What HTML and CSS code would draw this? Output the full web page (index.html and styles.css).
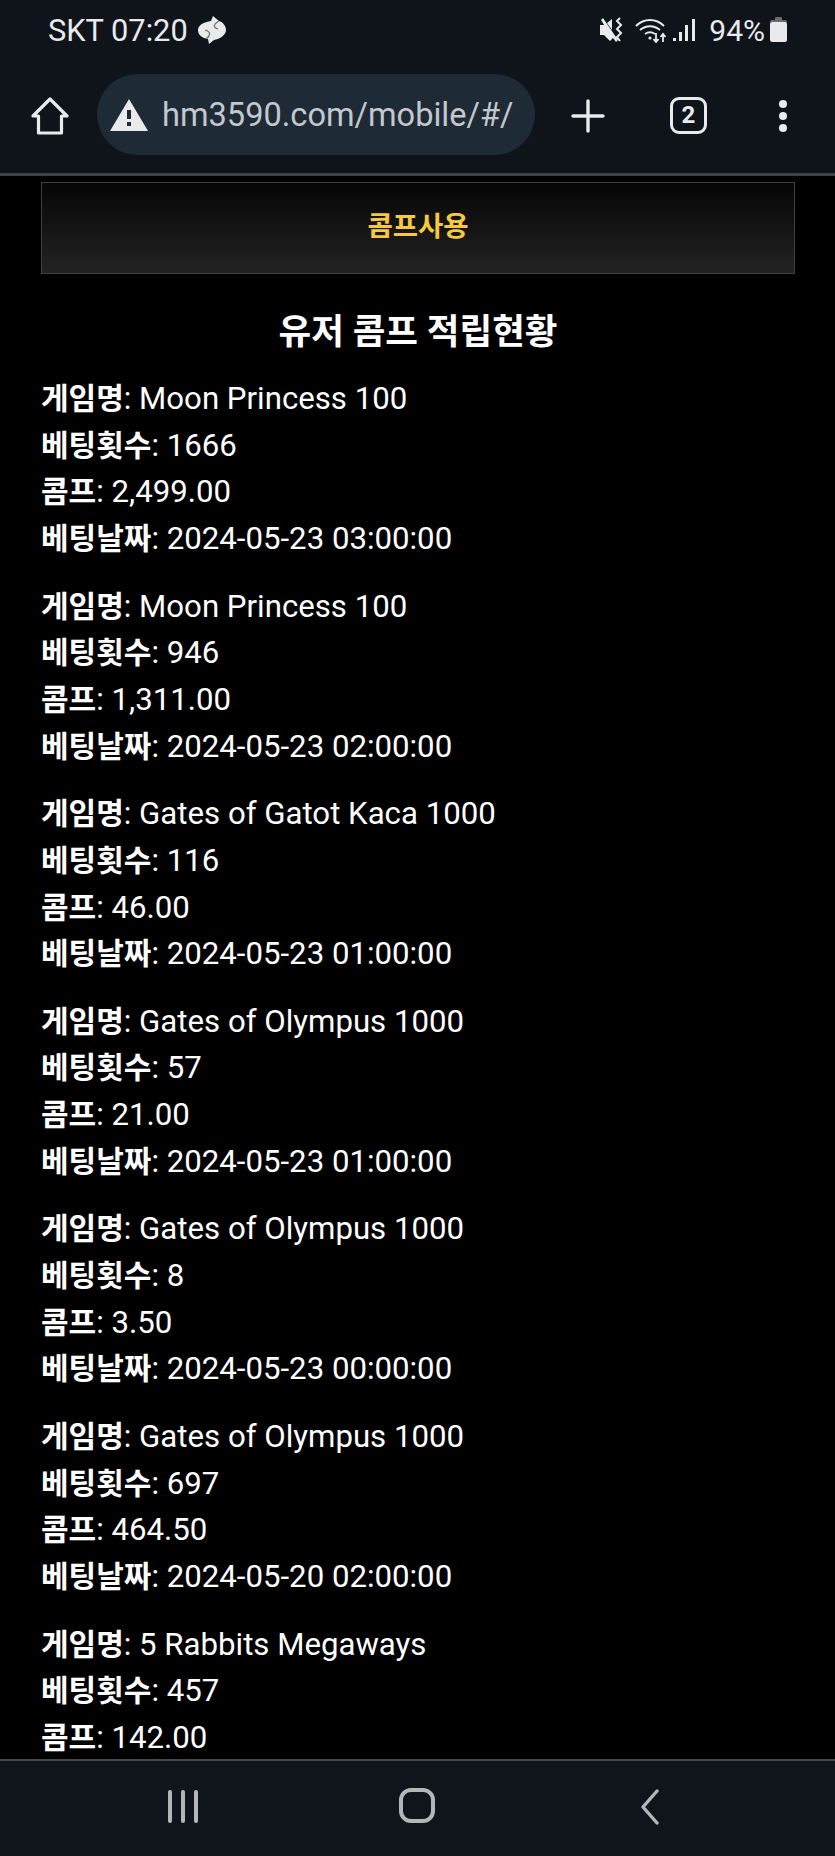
FILE: index.html
```html
<!DOCTYPE html>
<html lang="ko">
<head>
    <meta charset="UTF-8">
    <meta name="viewport" content="width=device-width, initial-scale=1.0">
    <title>콤프사용</title>
    <link rel="stylesheet" href="styles.css">
</head>
<body>
    <div class="phone">
        <header class="top-bar">
            <div class="status-bar">
                <div class="status-left">
                    <span>SKT 07:20</span>
                    <svg class="talk-icon" width="30" height="28" viewBox="0 0 30 28"><path d="M1 14C1 9 7 6 14 5L16 0 22 5C26 6 29 10 29 14 29 19 23 23 17 24L12 28 11 23C5 22 1 19 1 14Z" fill="#e8eaec"/><path d="M22 5C17 8 15 11 21 13M9 23C13 20 15 16 8 14" fill="none" stroke="#6d7074" stroke-width="1.300"/></svg>
                </div>
                <div class="status-right">
                    <svg width="26" height="26" viewBox="0 0 26 26"><path d="M1 8h4L2 3l2-2 15 22-2 2-3-4-3 3-6-6H1zM8 6l5-4v11z" fill="#e8eaec"/><path d="M21 1l-3 3 4 4-4 4 4 4-4 4 3 4" fill="none" stroke="#e8eaec" stroke-width="2"/></svg>
                    <svg class="wifi-icon" width="32" height="26" viewBox="0 0 32 26" fill="none" stroke="#e8eaec" stroke-width="2"><path d="M1 9c8-8 20-8 28 0M5 13c6-5 14-5 20 0M10 17c3-2 7-2 10 0"/><circle cx="15" cy="21" r="1.600" fill="#e8eaec" stroke="none"/><path d="M21 16v9M18.500 22l2.500 3 2.500-3M28 25v-7M25.500 20l2.500-3 2.500 3" stroke-width="1.800"/></svg>
                    <svg class="signal-icon" width="23" height="24" viewBox="0 0 23 24" fill="#e8eaec"><rect x="0" y="20" width="3" height="3"/><rect x="6" y="14" width="3" height="9"/><rect x="12" y="7" width="3" height="16"/><rect x="19" y="1" width="3" height="22"/></svg>
                    <span class="battery-text">94%</span>
                    <svg width="17" height="26" viewBox="0 0 17 26"><rect x="5" y="0" width="7" height="4" rx="1" fill="#6a6d70"/><rect x="0" y="3" width="17" height="4" rx="2" fill="#6a6d70"/><rect x="0" y="5" width="17" height="20" rx="2.500" fill="#e8eaec"/></svg>
                </div>
            </div>
            <div class="tool-bar">
                <svg class="home-icon" width="38" height="38" viewBox="0 0 38 38" fill="none" stroke="#e8eaec" stroke-width="3.200" stroke-linejoin="round"><path d="M2 19L19 2l17 17h-5.500v17h-23V19z"/></svg>
                <div class="url-pill">
                    <svg width="38" height="32" viewBox="0 0 38 32"><path d="M19 0l19 32H0z" fill="#e8eaec"/><rect x="17" y="11" width="4" height="9" fill="#1e2a36"/><rect x="17" y="23" width="4" height="4" fill="#1e2a36"/></svg>
                    <span class="url-text">hm3590.com/mobile/#/</span>
                </div>
                <svg class="plus-icon" width="34" height="34" viewBox="0 0 34 34" stroke="#e8eaec" stroke-width="3.400" stroke-linecap="round"><path d="M17 2v30M2 17h30"/></svg>
                <div class="tab-count">2</div>
                <div class="menu-dots"><i></i><i></i><i></i></div>
            </div>
        </header>

        <main class="content">
            <div class="comp-btn">콤프사용</div>
            <h2 class="list-title">유저 콤프 적립현황</h2>

            <div class="comp-item">
                <p><b>게임명</b>: Moon Princess 100</p>
                <p><b>베팅횟수</b>: 1666</p>
                <p><b>콤프</b>: 2,499.00</p>
                <p><b>베팅날짜</b>: 2024-05-23 03:00:00</p>
            </div>
            <div class="comp-item">
                <p><b>게임명</b>: Moon Princess 100</p>
                <p><b>베팅횟수</b>: 946</p>
                <p><b>콤프</b>: 1,311.00</p>
                <p><b>베팅날짜</b>: 2024-05-23 02:00:00</p>
            </div>
            <div class="comp-item">
                <p><b>게임명</b>: Gates of Gatot Kaca 1000</p>
                <p><b>베팅횟수</b>: 116</p>
                <p><b>콤프</b>: 46.00</p>
                <p><b>베팅날짜</b>: 2024-05-23 01:00:00</p>
            </div>
            <div class="comp-item">
                <p><b>게임명</b>: Gates of Olympus 1000</p>
                <p><b>베팅횟수</b>: 57</p>
                <p><b>콤프</b>: 21.00</p>
                <p><b>베팅날짜</b>: 2024-05-23 01:00:00</p>
            </div>
            <div class="comp-item">
                <p><b>게임명</b>: Gates of Olympus 1000</p>
                <p><b>베팅횟수</b>: 8</p>
                <p><b>콤프</b>: 3.50</p>
                <p><b>베팅날짜</b>: 2024-05-23 00:00:00</p>
            </div>
            <div class="comp-item">
                <p><b>게임명</b>: Gates of Olympus 1000</p>
                <p><b>베팅횟수</b>: 697</p>
                <p><b>콤프</b>: 464.50</p>
                <p><b>베팅날짜</b>: 2024-05-20 02:00:00</p>
            </div>
            <div class="comp-item">
                <p><b>게임명</b>: 5 Rabbits Megaways</p>
                <p><b>베팅횟수</b>: 457</p>
                <p><b>콤프</b>: 142.00</p>
            </div>
        </main>

        <nav class="nav-bar">
            <div class="nav-recent"><i></i><i></i><i></i></div>
            <div class="nav-home"></div>
            <svg width="20" height="36" viewBox="0 0 20 36" fill="none" stroke="#b4b6b8" stroke-width="3.400" stroke-linecap="round" stroke-linejoin="round"><path d="M17 2L3 18l14 16"/></svg>
        </nav>
    </div>
</body>
</html>
```

FILE: styles.css
```css
* { margin: 0; padding: 0; box-sizing: border-box; }
body {
    font-family: Roboto, 'Noto Sans CJK KR', sans-serif;
    background: #000;
}

.phone {
    width: 835px;
    height: 1856px;
    display: flex;
    flex-direction: column;
    overflow: hidden;
}

.top-bar {
    height: 176px;
    flex: none;
    background: #0f141b;
    border-bottom: 3px solid #3c4248;
}

.status-bar {
    height: 58px;
    padding: 2px 48px 0;
    display: flex;
    justify-content: space-between;
    align-items: center;
    color: #e8eaec;
    font-size: 30px;
}

.status-left {
    display: flex;
    align-items: center;
    gap: 9px;
    font-size: 30.800px;
}

.status-right {
    display: flex;
    align-items: center;
}

.wifi-icon { margin-left: 10px; }
.signal-icon { margin-left: 6px; }
.battery-text { margin: 0 5px 0 13px; }

.tool-bar {
    height: 115px;
    padding: 0 0 0 31px;
    display: flex;
    align-items: center;
}

.home-icon { margin-right: 28px; flex: none; }

.url-pill {
    width: 438px;
    height: 81px;
    flex: none;
    margin-top: -2px;
    padding-left: 13px;
    display: flex;
    align-items: center;
    gap: 14px;
    border-radius: 41px;
    background: #1e2a36;
    overflow: hidden;
}

.url-text {
    font-size: 32.600px;
    color: #c3c8cc;
    white-space: nowrap;
}

.plus-icon { margin-left: 36px; flex: none; }

.tab-count {
    width: 37px;
    height: 37px;
    margin-left: 65px;
    border: 3.500px solid #e8eaec;
    border-radius: 9px;
    color: #e8eaec;
    font-size: 24px;
    font-weight: 700;
    text-align: center;
    line-height: 30px;
}

.menu-dots {
    margin-left: 72px;
    display: flex;
    flex-direction: column;
    gap: 4px;
}

.menu-dots i {
    display: block;
    width: 8px;
    height: 8px;
    border-radius: 50%;
    background: #e8eaec;
}

.content {
    flex: 1;
    min-height: 0;
    overflow: hidden;
    padding: 6px 40px 0 41px;
    color: #fff;
}

.comp-btn {
    height: 92px;
    border: 1px solid #3f3f3f;
    background: linear-gradient(#060606, #232323);
    color: #f7c93e;
    font-size: 27.500px;
    font-weight: 700;
    text-align: center;
    line-height: 88px;
}

.list-title {
    margin-top: 35px;
    font-size: 35.500px;
    font-weight: 700;
    line-height: 46px;
    text-align: center;
}

.comp-item {
    margin-top: 21.200px;
}

.comp-item:first-of-type { margin-top: 12px; }

.comp-item p {
    font-size: 31.200px;
    line-height: 46.600px;
}

.comp-item b { font-size: 30px; }

.nav-bar {
    height: 97px;
    flex: none;
    background: #10151c;
    border-top: 2px solid #45494e;
    position: relative;
    display: grid;
    grid-template-columns: 472px 1fr 20px;
    padding: 0 175px 4px 168px;
    align-items: center;
}

.nav-recent {
    display: flex;
    gap: 9px;
    height: 33px;
}

.nav-recent i {
    display: block;
    width: 4px;
    height: 100%;
    border-radius: 2px;
    background: #b4b6b8;
}

.nav-bar::after {
    content: '';
    box-sizing: border-box;
    position: absolute;
    left: 399px;
    top: 27px;
    width: 36px;
    height: 35px;
    border: 4px solid #b4b6b8;
    border-radius: 12px;
}
```
